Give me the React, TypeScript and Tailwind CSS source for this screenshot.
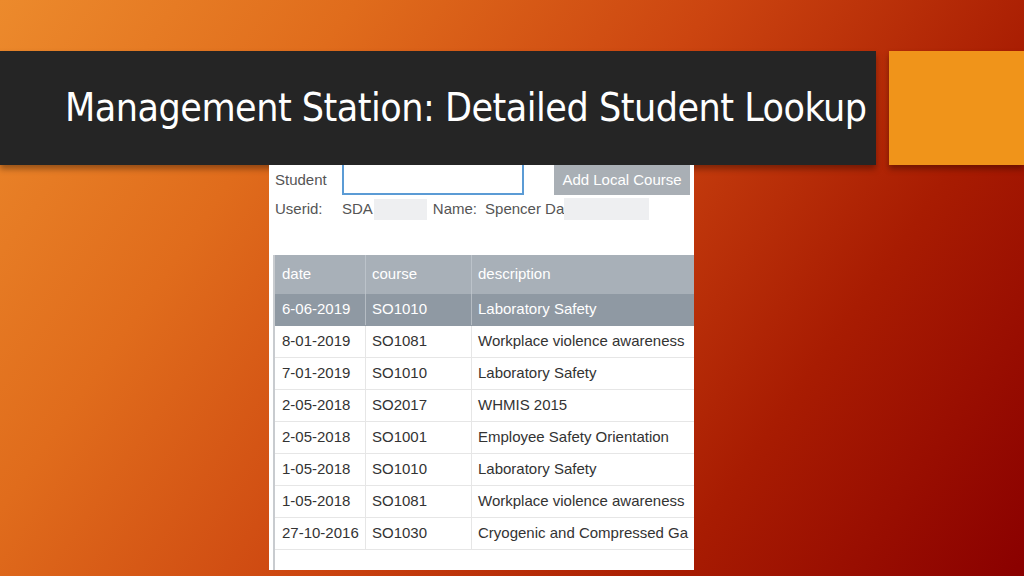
const rows = [
  { date: "6-06-2019", course: "SO1010", desc: "Laboratory Safety", selected: true },
  { date: "8-01-2019", course: "SO1081", desc: "Workplace violence awareness" },
  { date: "7-01-2019", course: "SO1010", desc: "Laboratory Safety" },
  { date: "2-05-2018", course: "SO2017", desc: "WHMIS 2015" },
  { date: "2-05-2018", course: "SO1001", desc: "Employee Safety Orientation" },
  { date: "1-05-2018", course: "SO1010", desc: "Laboratory Safety" },
  { date: "1-05-2018", course: "SO1081", desc: "Workplace violence awareness" },
  { date: "27-10-2016", course: "SO1030", desc: "Cryogenic and Compressed Ga" },
];

export default function App() {
  return (
    <div className="w-[1024px] h-[576px] overflow-hidden flex flex-col pt-[51px] bg-[linear-gradient(125deg,#ec8a2c_0%,#e06c1c_25%,#cc4510_50%,#a81c02_75%,#8a0000_100%)]">
      {/* title band */}
      <div className="flex gap-[13px] h-[114px] shrink-0">
        <div className="w-[876px] bg-[#252525] flex items-center pl-[65px] shadow-[0_4px_6px_rgba(0,0,0,0.35)]">
          <h1 className="text-white text-[39px] leading-none tracking-[-0.5px] font-['DejaVu_Sans_Condensed',sans-serif] pb-[2px] whitespace-nowrap">
            Management Station: Detailed Student Lookup
          </h1>
        </div>
        <div className="flex-1 bg-[#f0941a] shadow-[0_4px_6px_rgba(0,0,0,0.35)]" />
      </div>

      {/* screenshot panel */}
      <div className="ml-[269px] w-[425px] h-[405px] bg-white overflow-hidden text-[15px] text-[#555] font-['Liberation_Sans',Arial,sans-serif]">
        <div className="flex items-center h-[30px] pl-[6px]">
          <span className="w-[67px]">Student</span>
          <div className="w-[182px] h-[30px] border-2 border-t-0 border-[#5b9bd5]" />
          <div className="ml-[30px] w-[136px] h-[30px] bg-[#a9afb5] text-white flex items-center justify-center">
            Add Local Course
          </div>
        </div>
        <div className="flex items-center h-[30px] pl-[6px] mt-[-1px]">
          <span className="w-[67px]">Userid:</span>
          <span>SDA</span>
          <div className="w-[53px] h-[21px] bg-[#eeeff1] ml-[1px]" />
          <span className="ml-[6px]">Name:</span>
          <span className="ml-[8px]">Spencer Da</span>
          <div className="w-[85px] h-[22px] bg-[#eeeff1]" />
        </div>

        <div className="flex mt-[31px] h-[315px]">
          <div className="w-[4px] shrink-0 bg-white" />
          <div className="w-[2px] shrink-0 bg-[#c8cbcf]" />
          <div className="flex-1 overflow-hidden">
            <div className="w-[460px]">
              <div className="flex h-[39px] bg-[#a8b0b8] text-white">
                <div className="w-[91px] shrink-0 pl-[7px] flex items-center border-r border-[#bcc3ca]">date</div>
                <div className="w-[106px] shrink-0 pl-[6px] flex items-center border-r border-[#bcc3ca]">course</div>
                <div className="flex-1 pl-[6px] flex items-center">description</div>
              </div>
              {rows.map((r, i) => (
                <div
                  key={i}
                  className={`flex h-[32px] border-b ${r.selected ? "bg-[#8f99a3] text-white border-[#8f99a3]" : "bg-white text-[#333] border-[#e6e6e6]"}`}
                >
                  <div className={`w-[91px] shrink-0 pl-[7px] flex items-center whitespace-nowrap border-r ${r.selected ? "border-[#b5bcc3]" : "border-[#e6e6e6]"}`}>{r.date}</div>
                  <div className={`w-[106px] shrink-0 pl-[6px] flex items-center border-r ${r.selected ? "border-[#b5bcc3]" : "border-[#e6e6e6]"}`}>{r.course}</div>
                  <div className="flex-1 pl-[6px] flex items-center whitespace-nowrap">{r.desc}</div>
                </div>
              ))}
            </div>
          </div>
        </div>
      </div>
    </div>
  );
}
